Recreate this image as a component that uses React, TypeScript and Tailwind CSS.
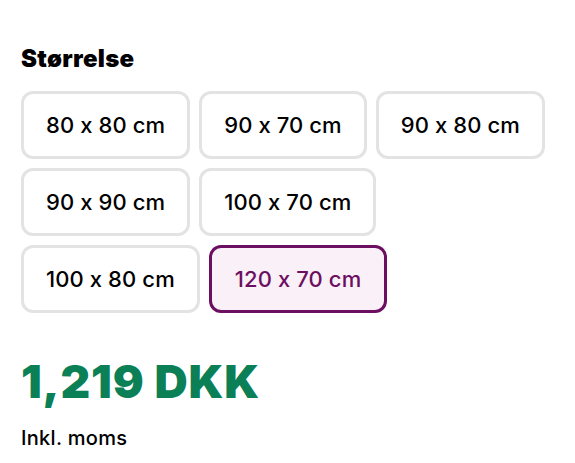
import React from 'react';

const SIZES = ["80 x 80 cm", "90 x 70 cm", "90 x 80 cm", "90 x 90 cm", "100 x 70 cm", "100 x 80 cm", "120 x 70 cm"];
const SELECTED = "120 x 70 cm";

const App = () => {
    return (
        <div className="w-[575px] h-[463px] bg-white px-[21px] pt-[45px] font-['Inter',sans-serif] text-black [font-feature-settings:'calt'_0]">
            <h2 className="text-[24px] font-black leading-7 tracking-[0.3px]">Størrelse</h2>
            <div className="flex flex-row flex-wrap gap-[9px] mt-[18px] w-[536px]">
                {SIZES.map((size) => (
                    size === SELECTED ? (
                        <button key={size} className="h-[68px] px-[23px] rounded-[12px] border-[3px] border-[#6c0f60] bg-[#faf0f8] text-[#6c0f60] text-[22px] font-medium tracking-[0.1px]">
                            {size}
                        </button>
                    ) : (
                        <button key={size} className="h-[68px] px-[22px] rounded-[12px] border-[3px] border-[#e3e3e3] bg-white text-[22px] font-medium tracking-[0.1px]">
                            {size}
                        </button>
                    )
                ))}
            </div>
            <p className="mt-[42px] text-[46px] font-black leading-[52px] tracking-[0.8px] text-[#0b7f55]">1,219 DKK</p>
            <p className="mt-[19px] text-[20px] font-medium leading-6 tracking-[0.3px]">Inkl. moms</p>
        </div>
    );
};

export default App;
